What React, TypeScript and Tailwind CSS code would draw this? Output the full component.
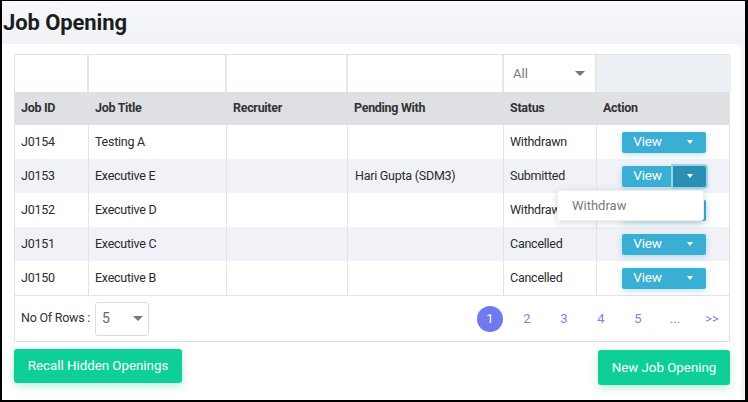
import React from "react";

type Row = { id: string; title: string; recruiter: string; pending: string; status: string };

const ROWS: Row[] = [
  { id: "J0154", title: "Testing A", recruiter: "", pending: "", status: "Withdrawn" },
  { id: "J0153", title: "Executive E", recruiter: "", pending: "Hari Gupta (SDM3)", status: "Submitted" },
  { id: "J0152", title: "Executive D", recruiter: "", pending: "", status: "Withdrawn" },
  { id: "J0151", title: "Executive C", recruiter: "", pending: "", status: "Cancelled" },
  { id: "J0150", title: "Executive B", recruiter: "", pending: "", status: "Cancelled" },
];

const COLS = "grid grid-cols-[74px_138px_121px_156px_93px_134px]";

function Caret({ className }: { className: string }) {
  return <span className={"inline-block w-0 h-0 border-x-transparent " + className} />;
}

function ViewButton({ open }: { open?: boolean }) {
  return (
    <div className="flex h-[21px] w-[84px] rounded-[2px] shadow-[0_2px_6px_rgba(59,173,212,0.35)] text-white text-[13.5px] tracking-[-0.2px]">
      <button className="w-[51px] bg-[#3aaed3] rounded-l-[2px] flex items-center justify-center leading-none">
        View
      </button>
      <button
        className={
          "w-[33px] rounded-r-[2px] flex items-center justify-center " +
          (open ? "bg-[#2a8fb0] ring-2 ring-[#9ad6ea]" : "bg-[#3aaed3]")
        }
      >
        <Caret className="border-x-[3.5px] border-t-[4px] border-t-white" />
      </button>
    </div>
  );
}

export default function App() {
  return (
    <div className="w-[748px] h-[402px] overflow-hidden border-black border-l-2 border-t border-r-[3px] border-b-2 bg-[#f3f4f8] flex flex-col font-['Roboto',sans-serif] text-[#2b2b2b]">
      {/* Page title */}
      <div className="h-[43px] flex items-center pl-[1px] bg-gradient-to-b from-[#f7f8fb] to-[#f1f2f6]">
        <h1 className="text-[22px] font-bold text-[#1d1d1f] tracking-[-0.1px]">Job Opening</h1>
      </div>

      {/* Card */}
      <div className="flex-1 bg-white rounded-tr-[5px] mr-[4px] pl-[12px] pt-[10px]">
        <div className="w-[716px] border border-[#e2e2e2] relative">
          {/* Filter row */}
          <div className={COLS + " h-[37px]"}>
            <div className="border-r-2 border-[#e6e6e6] bg-white" />
            <div className="border-r-2 border-[#e6e6e6] bg-white" />
            <div className="border-r-2 border-[#e6e6e6] bg-white" />
            <div className="border-r-2 border-[#e6e6e6] bg-white" />
            <div className="border-r-2 border-[#e6e6e6] bg-white flex items-center justify-between pl-[9px] pr-[10px]">
              <span className="text-[13px] text-[#777]">All</span>
              <Caret className="border-x-[5px] border-t-[5px] border-t-[#777]" />
            </div>
            <div className="bg-[#eceff4]" />
          </div>

          {/* Header row */}
          <div className={COLS + " h-[33px] bg-[#dfe0e4] text-[12.5px] font-bold text-[#333] tracking-[-0.3px]"}>
            {["Job ID", "Job Title", "Recruiter", "Pending With", "Status", "Action"].map((h) => (
              <div key={h} className="flex items-center pl-[6px]">
                {h}
              </div>
            ))}
          </div>

          {/* Body rows */}
          {ROWS.map((r, i) => (
            <div
              key={r.id}
              className={
                COLS +
                " h-[34px] text-[12.5px] tracking-[-0.25px] " +
                (i % 2 === 1 ? "bg-[#f0f2f8]" : "bg-white")
              }
            >
              <div className="border-r border-[#e4e4e4] flex items-center pl-[6px]">{r.id}</div>
              <div className="border-r border-[#e4e4e4] flex items-center pl-[6px]">{r.title}</div>
              <div className="border-r border-[#e4e4e4] flex items-center pl-[6px]">{r.recruiter}</div>
              <div className="border-r border-[#e4e4e4] flex items-center pl-[7px]">{r.pending}</div>
              <div className="border-r border-[#e4e4e4] flex items-center pl-[6px]">{r.status}</div>
              <div className="flex items-center justify-center">
                <ViewButton open={i === 1} />
              </div>
            </div>
          ))}

          {/* Dropdown menu */}
          <div className="absolute left-[542px] top-[135px] w-[147px] h-[31px] bg-white rounded-[3px] shadow-[0_2px_8px_rgba(0,0,0,0.15)] border border-[#eeeeee] flex items-center pl-[14px] text-[13px] text-[#7a7a7a]">
            Withdraw
          </div>

          {/* Footer */}
          <div className="h-[46px] border-t border-[#e4e4e4] flex items-center justify-between pl-[6px] pr-[4px]">
            <div className="flex items-center gap-[5px] text-[12.5px] tracking-[-0.25px] text-[#333]">
              <span>No Of Rows :</span>
              <div className="w-[54px] h-[34px] border border-[#dddddd] rounded-[3px] flex items-center justify-between pl-[6px] pr-[5px]">
                <span className="text-[14px] text-[#666]">5</span>
                <Caret className="border-x-[5px] border-t-[5px] border-t-[#777]" />
              </div>
            </div>
            <div className="flex items-center gap-[11px] text-[13px] text-[#7a82ee]">
              <span className="w-[26px] h-[26px] rounded-full bg-[#6f79f0] text-white flex items-center justify-center">
                1
              </span>
              <span className="w-[26px] text-center">2</span>
              <span className="w-[26px] text-center">3</span>
              <span className="w-[26px] text-center">4</span>
              <span className="w-[26px] text-center">5</span>
              <span className="w-[26px] text-center">...</span>
              <span className="w-[26px] text-center">&gt;&gt;</span>
            </div>
          </div>
        </div>

        {/* Bottom buttons */}
        <div className="w-[716px] flex justify-between items-start mt-[7px]">
          <button className="h-[34px] w-[168px] bg-[#0ecf95] text-white text-[13.3px] rounded-[3px] shadow-[0_3px_8px_rgba(14,207,149,0.3)]">
            Recall Hidden Openings
          </button>
          <button className="h-[35px] w-[132px] mt-[1px] bg-[#0ecf95] text-white text-[13.3px] rounded-[3px] shadow-[0_3px_8px_rgba(14,207,149,0.3)]">
            New Job Opening
          </button>
        </div>
      </div>
    </div>
  );
}
